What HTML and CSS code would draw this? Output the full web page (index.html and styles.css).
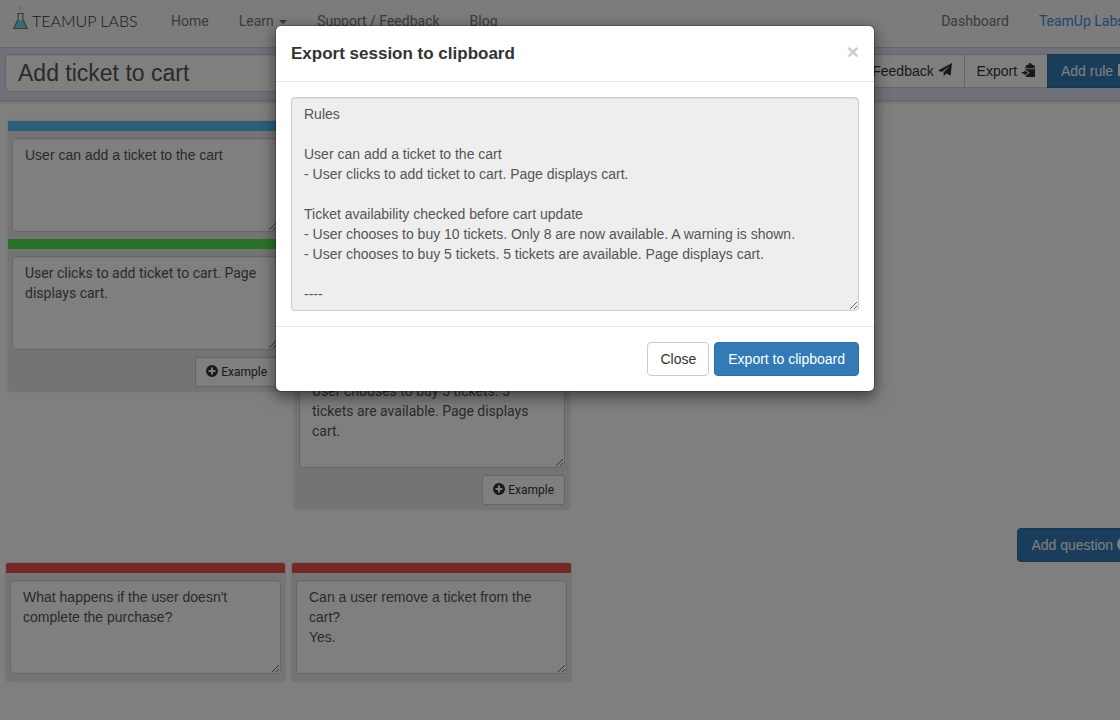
FILE: index.html
```html
<!DOCTYPE html>
<html lang="en">
<head>
    <meta charset="UTF-8">
    <meta name="viewport" content="width=device-width, initial-scale=1.0">
    <title>TeamUp Labs - Add ticket to cart</title>
    <link rel="stylesheet" href="styles.css">
</head>
<body>
    <div class="page">
        <!-- Navigation -->
        <nav class="navbar">
            <a class="brand" href="#">
                <svg width="17" height="24" viewBox="0 0 17 24" aria-hidden="true">
                    <path d="M5.4 14.5 L2.6 21.4 H14.4 L11.4 14.5 Q8.5 13.5 5.4 14.5 Z" fill="#6cd8ee"/>
                    <path d="M5 7.5 H12 M6.2 7.5 V13 L1.8 22.3 H15.2 L10.8 13 V7.5" fill="none" stroke="#777" stroke-width="1.2"/>
                    <circle cx="8" cy="2" r="1" fill="#6cd8ee"/>
                    <circle cx="9" cy="5" r=".6" fill="#6cd8ee"/>
                </svg>
                <span>TEAMUP LABS</span>
            </a>
            <a class="nav-link" href="#">Home</a>
            <a class="nav-link" href="#">Learn <span class="caret"></span></a>
            <a class="nav-link" href="#">Support / Feedback</a>
            <a class="nav-link" href="#">Blog</a>
            <div class="nav-right">
                <a class="nav-link" href="#">Dashboard</a>
                <a class="nav-link account" href="#">TeamUp Labs <span class="caret"></span></a>
            </div>
        </nav>

        <!-- Session toolbar -->
        <header class="toolbar">
            <input class="form-control story" type="text" value="Add ticket to cart" aria-label="Story">
            <div class="btn-group">
                <button class="btn" type="button">Feedback
                    <svg class="icon" viewBox="0 0 14 14" aria-hidden="true"><path d="M14 0 L12.6 12.5 L8 10.4 L5.6 13.8 V9.6 L11.8 2.6 L4 8.9 L0 7.6 Z" fill="currentColor"/></svg>
                </button>
                <button class="btn" type="button">Export
                    <svg class="icon" viewBox="0 0 14 14" aria-hidden="true"><path d="M5 2 H6.5 L7.5 1.8 Q7.5 0 9.2 0 Q10.8 0 10.8 1.8 L12 2 H13.5 V4 L12 5.5 H7 L5 4 Z M4 3 L6 6.3 H13 L14 3.2 V13 Q14 14 13 14 H5.5 Q4.5 14 4.5 13 L8.5 9.8 L4.5 6.6 Z M0 8.9 H3.5 V7 L7 9.8 L3.5 12.6 V10.7 H2 Z" fill="currentColor"/></svg>
                </button>
                <button class="btn btn-primary" type="button">Add rule
                    <svg class="icon" viewBox="0 0 14 14" aria-hidden="true"><path d="M1 1 H13 V13 H1 Z M3 4 V11 H11 V4 Z" fill="currentColor" fill-rule="evenodd"/></svg>
                </button>
            </div>
        </header>

        <main>
            <!-- Rules and their examples -->
            <section class="rules">
                <article class="column">
                    <div class="card rule">
                        <textarea class="form-control" rows="4" aria-label="Rule">User can add a ticket to the cart</textarea>
                    </div>
                    <div class="card example">
                        <textarea class="form-control" rows="4" aria-label="Example">User clicks to add ticket to cart. Page displays cart.</textarea>
                    </div>
                    <button class="btn btn-sm" type="button">
                        <svg class="icon" viewBox="0 0 14 14" aria-hidden="true"><path d="M7 0 A7 7 0 1 1 7 14 A7 7 0 1 1 7 0 Z M5.8 3 V5.8 H3 V8.2 H5.8 V11 H8.2 V8.2 H11 V5.8 H8.2 V3 Z" fill="currentColor" fill-rule="evenodd"/></svg>
                        Example</button>
                </article>
                <article class="column">
                    <div class="card rule">
                        <textarea class="form-control" rows="4" aria-label="Rule">Ticket availability checked before cart update</textarea>
                    </div>
                    <div class="card example">
                        <textarea class="form-control" rows="4" aria-label="Example">User chooses to buy 10 tickets. Only 8 are now available. A warning is shown.</textarea>
                    </div>
                    <div class="card example">
                        <textarea class="form-control" rows="4" aria-label="Example">User chooses to buy 5 tickets. 5 tickets are available. Page displays cart.</textarea>
                    </div>
                    <button class="btn btn-sm" type="button">
                        <svg class="icon" viewBox="0 0 14 14" aria-hidden="true"><path d="M7 0 A7 7 0 1 1 7 14 A7 7 0 1 1 7 0 Z M5.8 3 V5.8 H3 V8.2 H5.8 V11 H8.2 V8.2 H11 V5.8 H8.2 V3 Z" fill="currentColor" fill-rule="evenodd"/></svg>
                        Example</button>
                </article>
            </section>

            <!-- Questions -->
            <div class="question-bar">
                <button class="btn btn-primary" type="button">Add question
                    <svg class="icon" viewBox="0 0 14 14" aria-hidden="true"><path d="M7 0 A7 7 0 1 1 7 14 A7 7 0 1 1 7 0 Z M6 10 V12 H8 V10 Z M4 5 H6 Q6 4 7 4 Q8 4 8 5 Q8 5.6 7 6.3 Q6 7 6 9 H8 Q8 8 9 7.2 Q10 6.3 10 5 Q10 2.2 7 2.2 Q4 2.2 4 5 Z" fill="currentColor" fill-rule="evenodd"/></svg>
                </button>
            </div>
            <section class="questions">
                <div class="card question">
                    <textarea class="form-control" rows="4" aria-label="Question">What happens if the user doesn't complete the purchase?</textarea>
                </div>
                <div class="card question">
                    <textarea class="form-control" rows="4" aria-label="Question">Can a user remove a ticket from the cart?
Yes.</textarea>
                </div>
            </section>
        </main>

        <!-- Export dialog -->
        <div class="backdrop">
            <div class="modal" role="dialog" aria-labelledby="exportTitle">
                <div class="modal-header">
                    <h4 id="exportTitle">Export session to clipboard</h4>
                    <button class="close" type="button" aria-label="Close">&times;</button>
                </div>
                <div class="modal-body">
                    <textarea class="form-control export-text" rows="10" readonly aria-labelledby="exportTitle">Rules

User can add a ticket to the cart
- User clicks to add ticket to cart. Page displays cart.

Ticket availability checked before cart update
- User chooses to buy 10 tickets. Only 8 are now available. A warning is shown.
- User chooses to buy 5 tickets. 5 tickets are available. Page displays cart.

----</textarea>
                </div>
                <div class="modal-footer">
                    <button class="btn" type="button">Close</button>
                    <button class="btn btn-primary" type="button">Export to clipboard</button>
                </div>
            </div>
        </div>
    </div>
</body>
</html>
```
FILE: styles.css
```css
* {
    box-sizing: border-box;
}

body {
    margin: 0;
    min-height: 100vh;
    overflow: hidden;
    background-color: #fff;
    color: #333;
    font-family: "Liberation Sans", Arial, sans-serif;
    font-size: 14px;
    line-height: 20px;
}

/* The page runs a little past the right edge of the window */
.page {
    position: relative;
    min-height: 100vh;
    margin-right: -30px;
}

/* Navigation */
.navbar {
    display: flex;
    align-items: center;
    height: 48px;
    padding-bottom: 6px;
    background-color: #f8f8f8;
    border-bottom: 1px solid #d8d8d8;
    font-family: Roboto, sans-serif;
}

.brand {
    display: flex;
    align-items: center;
    gap: 3px;
    width: 156px;
    padding-left: 12px;
    color: #333;
    font-family: Lato, sans-serif;
    font-size: 16px;
    font-weight: 300;
    text-decoration: none;
    white-space: nowrap;
}

.brand svg {
    margin-bottom: 6px;
}

.nav-link {
    padding: 0 15px;
    color: #777;
    text-decoration: none;
}

.nav-right {
    display: flex;
    margin-left: auto;
}

.nav-link.account {
    padding-right: 12px;
    color: #3b8ede;
}

.caret {
    display: inline-block;
    margin-left: 2px;
    vertical-align: middle;
    border-top: 4px solid;
    border-right: 4px solid transparent;
    border-left: 4px solid transparent;
}

/* Form controls */
.form-control {
    display: block;
    width: 100%;
    padding: 6px 12px;
    background-color: #fff;
    border: 1px solid #ccc;
    border-radius: 4px;
    box-shadow: inset 0 1px 1px rgba(0, 0, 0, 0.075);
    color: #555;
    font: inherit;
}

.btn {
    padding: 6px 12px;
    background-color: #fff;
    border: 1px solid #ccc;
    border-radius: 4px;
    color: #333;
    font: inherit;
    white-space: nowrap;
    cursor: pointer;
}

.btn-primary {
    padding: 6px 13px;
    background-color: #337ab7;
    border-color: #2e6da4;
    color: #fff;
}

.btn-sm {
    padding: 5px 10px;
    border-radius: 3px;
    font-family: Roboto, sans-serif;
    font-size: 12px;
    line-height: 18px;
}

.icon {
    width: 1em;
    height: 1em;
    vertical-align: -1px;
}

/* Session toolbar */
.toolbar {
    display: flex;
    align-items: flex-start;
    gap: 10px;
    height: 53px;
    padding: 6px 5px;
    background-color: #dee6f2;
    border-bottom: 1px solid #ccc;
    box-shadow: 0 1px 3px rgba(0, 0, 0, 0.2);
}

.story {
    flex: 1;
    height: 38px;
    font-size: 23px;
}

.btn-group {
    display: flex;
}

.btn-group .btn {
    border-radius: 0;
}

.btn-group .btn + .btn {
    margin-left: -1px;
}

/* Rule columns */
.rules {
    display: flex;
    align-items: flex-start;
    gap: 13px;
    padding: 20px 8px 0;
}

.column {
    display: flex;
    flex-direction: column;
    width: 274px;
    padding-bottom: 4px;
    background-color: #e8e8e8;
    box-shadow: 0 0 3px rgba(0, 0, 0, 0.2);
}

.column .btn {
    align-self: flex-end;
    margin-right: 4px;
}

.card {
    padding: 7px 4px;
    border-top: 10px solid;
}

.rule {
    border-color: #56bef8;
}

.example {
    border-color: #54e454;
}

.example .form-control {
    font-family: Roboto, sans-serif;
}

/* Questions */
.question-bar {
    display: flex;
    justify-content: flex-end;
    padding: 19px 5px 0;
}

.questions {
    display: flex;
    gap: 7px;
    padding: 1px 6px 0;
}

.question {
    width: 279px;
    background-color: #e8e8e8;
    border-color: #e8524c;
    border-radius: 2px;
    box-shadow: 0 0 2px rgba(0, 0, 0, 0.3);
}

/* Export dialog */
.backdrop {
    position: absolute;
    inset: 0;
    padding-top: 25px;
    background-color: rgba(0, 0, 0, 0.5);
}

.modal {
    max-width: 600px;
    margin: 0 auto;
    background-color: #fff;
    background-clip: padding-box;
    border: 1px solid rgba(0, 0, 0, 0.2);
    border-radius: 6px;
    box-shadow: 0 5px 15px rgba(0, 0, 0, 0.5);
}

.modal-header {
    display: flex;
    justify-content: space-between;
    align-items: flex-start;
    padding: 15px;
    border-bottom: 1px solid #e5e5e5;
}

.modal-header h4 {
    margin: 0;
    font-size: 17px;
    line-height: 25px;
}

.close {
    padding: 0;
    background: none;
    border: 0;
    color: #ccc;
    font: bold 21px/21px "Liberation Sans", Arial, sans-serif;
    cursor: pointer;
}

.modal-body {
    padding: 15px;
}

.export-text {
    background-color: #eee;
}

.modal-footer {
    display: flex;
    justify-content: flex-end;
    gap: 5px;
    padding: 15px;
    border-top: 1px solid #e5e5e5;
}
```
